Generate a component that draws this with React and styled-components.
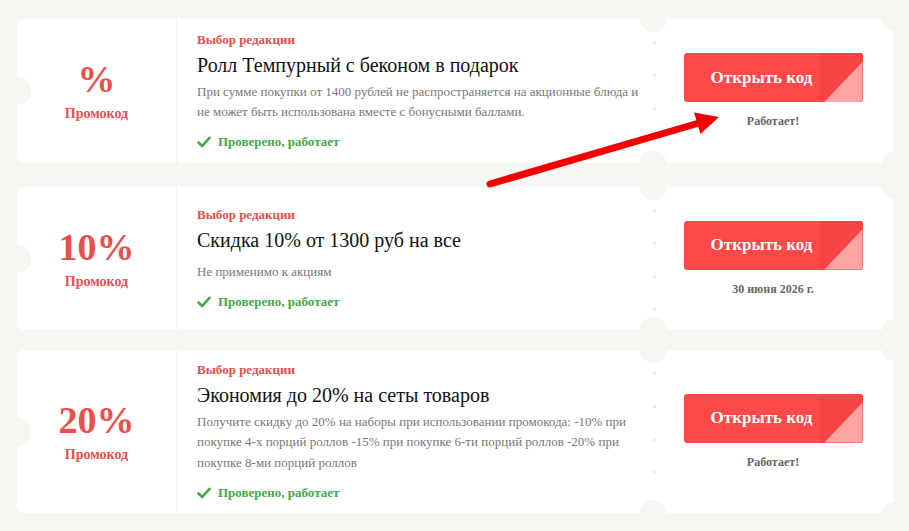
import React from "react";
import styled, { createGlobalStyle } from "styled-components";

const GlobalStyle = createGlobalStyle`
  html, body {
    margin: 0;
    padding: 0;
    background: #f7f6f2;
  }
  body {
    font-family: "Liberation Serif", "Times New Roman", serif;
  }
`;

const BG = "#f7f6f2";

const Page = styled.div`
  position: relative;
  width: 909px;
  height: 531px;
  box-sizing: border-box;
  padding: 19px 16px 0 17px;
  display: flex;
  flex-direction: column;
  overflow: hidden;
  font-family: "Liberation Serif", "Times New Roman", serif;
`;

const Card = styled.div`
  position: relative;
  display: flex;
  min-height: ${(p) => p.$h}px;
  margin-top: ${(p) => p.$mt}px;
  background: #fff;
  border-radius: 8px 0 0 8px;
`;

const Notch = styled.span`
  position: absolute;
  width: ${(p) => p.$r * 2}px;
  height: ${(p) => p.$r * 2}px;
  border-radius: 50%;
  background: ${BG};
  left: ${(p) => p.$x - p.$r}px;
  top: ${(p) => (p.$y === "mid" ? `calc(50% - ${p.$r}px)` : p.$y === "bottom" ? `calc(100% - ${p.$r}px)` : `${-p.$r}px`)};
`;

const CornerNotch = styled.span`
  position: absolute;
  right: -11px;
  width: 22px;
  height: 22px;
  border-radius: 50%;
  background: ${BG};
  ${(p) => (p.$bottom ? "bottom: -11px;" : "top: -11px;")}
`;

const Badge = styled.div`
  width: 159px;
  flex: none;
  border-right: 1px solid #f3f2ef;
  display: flex;
  flex-direction: column;
  align-items: center;
  justify-content: center;
  color: #e8504b;
  font-weight: bold;
`;

const Value = styled.div`
  font-size: 38px;
  line-height: 40px;
`;

const BadgeLabel = styled.div`
  font-size: 14px;
  line-height: 18px;
  margin-top: 6px;
`;

const Body = styled.div`
  flex: 1;
  padding: 12px 12px 12px 20px;
  display: flex;
  flex-direction: column;
  justify-content: center;
`;

const Pick = styled.div`
  color: #e4504c;
  font-weight: bold;
  font-size: 13px;
  line-height: 16px;
`;

const Title = styled.div`
  color: #111;
  font-size: 20px;
  line-height: 24px;
  margin-top: 5px;
`;

const Desc = styled.div`
  color: #777;
  font-size: 13px;
  line-height: 20.4px;
  margin-top: ${(p) => p.$mt}px;
  max-width: 446px;
`;

const Checked = styled.div`
  display: flex;
  align-items: center;
  gap: 7px;
  color: #45a84a;
  font-weight: bold;
  font-size: 13px;
  line-height: 16px;
  margin-top: 12px;
`;

const Action = styled.div`
  width: 240px;
  flex: none;
  display: flex;
  flex-direction: column;
  align-items: center;
  justify-content: center;
  background: radial-gradient(circle at 1.5px 50%, #efeee9 1.5px, transparent 2px) 0 7px / 4px 33px repeat-y;
`;

const OpenButton = styled.button`
  position: relative;
  width: 179px;
  height: 49px;
  border: none;
  border-radius: 3px;
  background: #ff4848;
  color: #fff;
  font-family: inherit;
  font-weight: bold;
  font-size: 17px;
  padding: 0 23px 0 0;
  overflow: hidden;
  cursor: pointer;
  &::before {
    content: "";
    position: absolute;
    top: 0;
    right: 0;
    width: 41px;
    height: 100%;
    background: #f74444;
    box-shadow: -1px 0 2px rgba(180, 30, 30, 0.15);
  }
  &::after {
    content: "";
    position: absolute;
    top: 0;
    right: 0;
    width: 41px;
    height: 100%;
    background: #ffa6a4;
    clip-path: polygon(100% 18%, 100% 100%, 7% 100%);
  }
`;

const ButtonText = styled.span`
  position: relative;
  z-index: 1;
`;

const Status = styled.div`
  color: #666;
  font-weight: bold;
  font-size: 12px;
  line-height: 16px;
  margin-top: 11px;
`;

const Arrow = styled.svg`
  position: absolute;
  left: 0;
  top: 0;
  pointer-events: none;
`;

const CheckIcon = () => (
  <svg width="14" height="12" viewBox="0 0 14 12">
    <path d="M1.5 6.5 L5.2 10 L12.5 1.8" fill="none" stroke="#45a84a" strokeWidth="2.6" strokeLinecap="round" strokeLinejoin="round" />
  </svg>
);

const promos = [
  {
    value: "%",
    title: "Ролл Темпурный с беконом в подарок",
    desc: "При сумме покупки от 1400 рублей не распространяется на акционные блюда и не может быть использована вместе с бонусными баллами.",
    status: "Работает!",
    h: 144,
    mt: 0,
    descGap: 5,
  },
  {
    value: "10%",
    title: "Скидка 10% от 1300 руб на все",
    desc: "Не применимо к акциям",
    status: "30 июня 2026 г.",
    h: 143,
    mt: 24,
    descGap: 10,
  },
  {
    value: "20%",
    title: "Экономия до 20% на сеты товаров",
    desc: "Получите скидку до 20% на наборы при использовании промокода: -10% при покупке 4-х порций роллов -15% при покупке 6-ти порций роллов -20% при покупке 8-ми порций роллов",
    status: "Работает!",
    h: 162,
    mt: 20,
    descGap: 5,
  },
];

const PromoCard = ({ p }) => (
  <Card $h={p.h} $mt={p.mt}>
    <Notch $r={14} $x={0} $y="mid" />
    <Notch $r={13} $x={636} $y="top" />
    <Notch $r={13} $x={636} $y="bottom" />
    <CornerNotch />
    <CornerNotch $bottom />
    <Badge>
      <Value>{p.value}</Value>
      <BadgeLabel>Промокод</BadgeLabel>
    </Badge>
    <Body>
      <Pick>Выбор редакции</Pick>
      <Title>{p.title}</Title>
      <Desc $mt={p.descGap}>{p.desc}</Desc>
      <Checked>
        <CheckIcon />
        Проверено, работает
      </Checked>
    </Body>
    <Action>
      <OpenButton>
        <ButtonText>Открыть код</ButtonText>
      </OpenButton>
      <Status>{p.status}</Status>
    </Action>
  </Card>
);

const App = () => (
  <>
    <GlobalStyle />
    <Page>
      {promos.map((p, i) => (
        <PromoCard key={i} p={p} />
      ))}
      <Arrow width="909" height="531" viewBox="0 0 909 531">
        <line x1="490" y1="184" x2="699" y2="123" stroke="#f50000" strokeWidth="7" strokeLinecap="round" />
        <polygon points="694,112.5 719,117 700.5,134" fill="#f50000" />
      </Arrow>
    </Page>
  </>
);

export default App;
